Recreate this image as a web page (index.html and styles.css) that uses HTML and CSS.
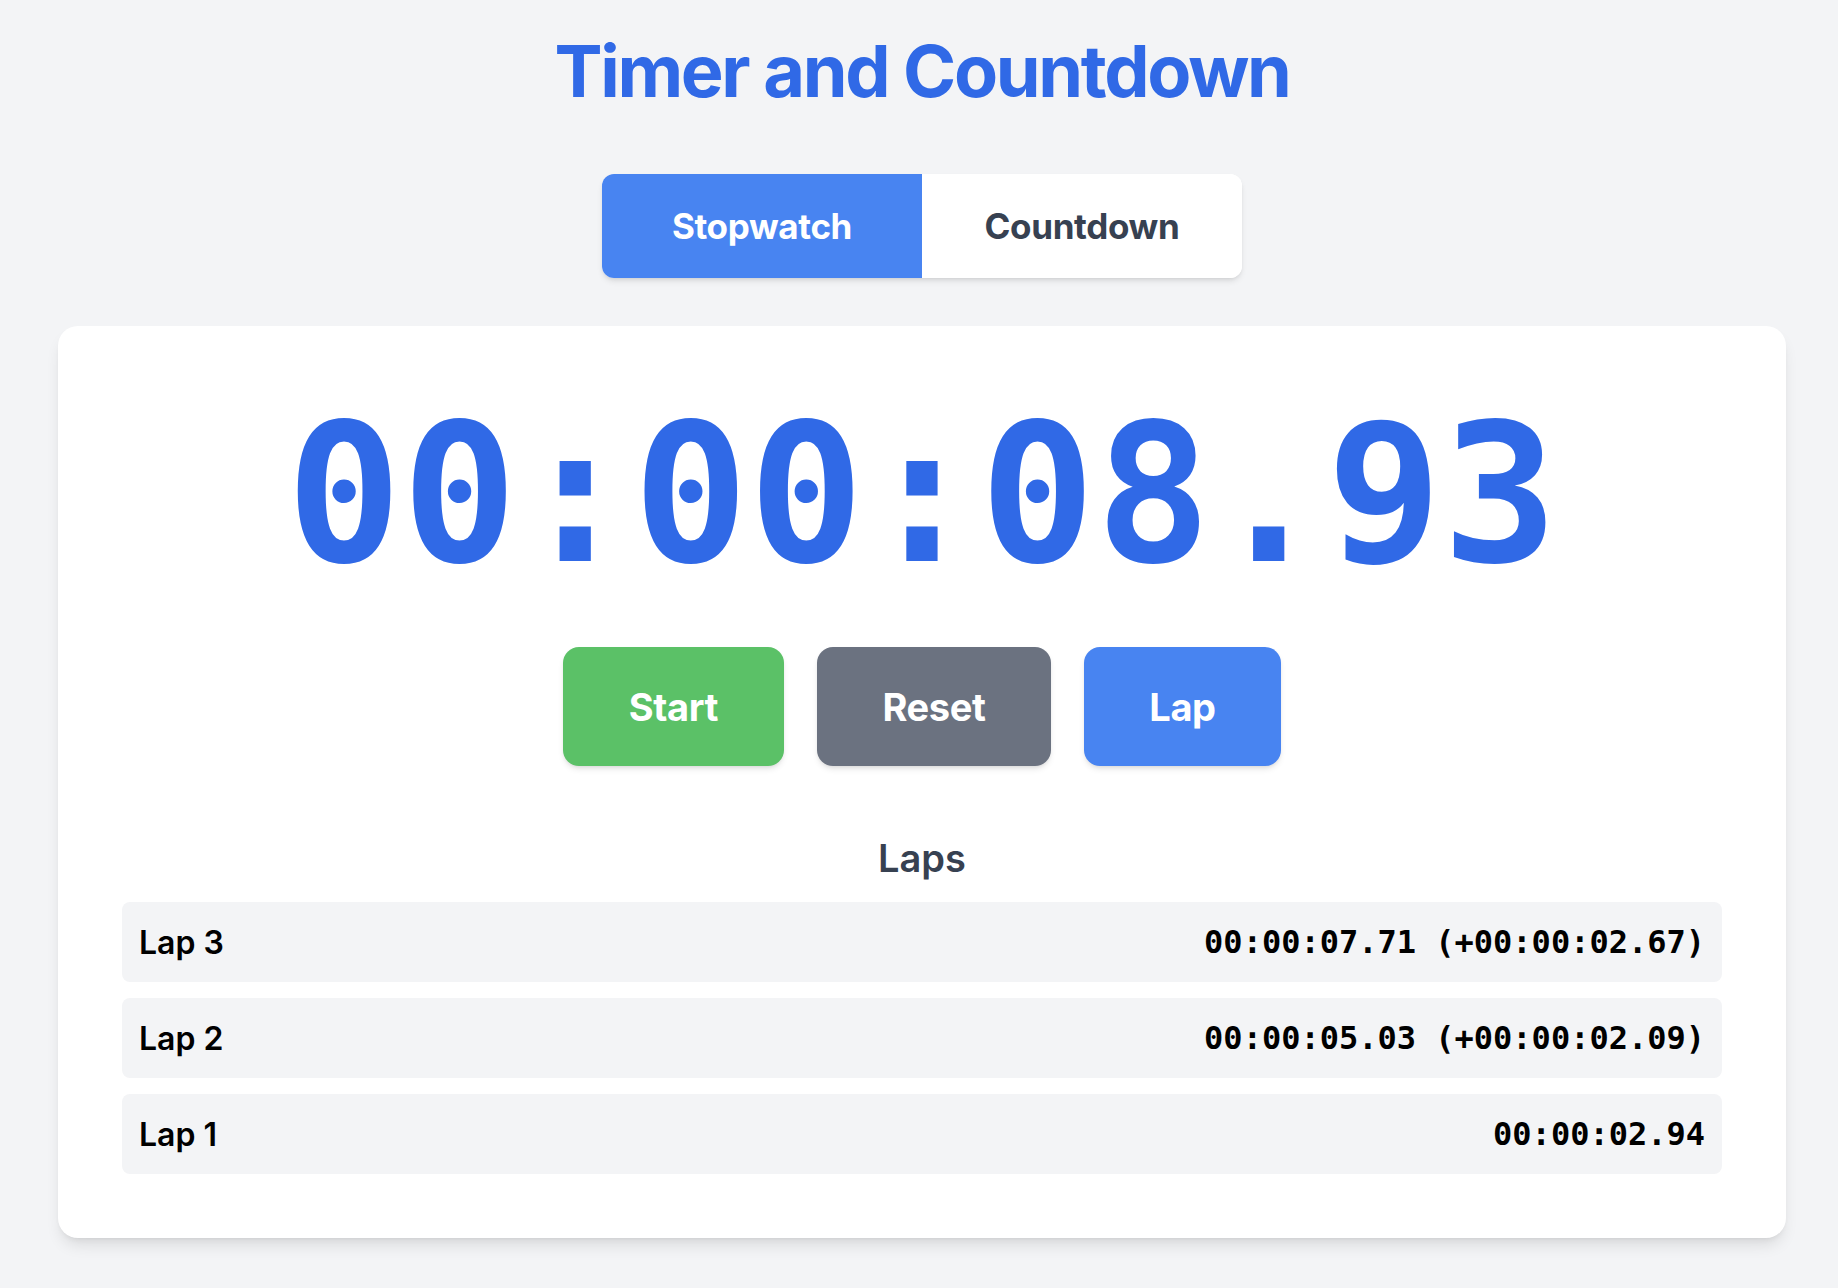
FILE: index.html
```html
<!DOCTYPE html>
<html lang="en">
<head>
<meta charset="utf-8">
<title>Timer and Countdown</title>
<link rel="stylesheet" href="styles.css">
</head>
<body>
<main class="app">
  <h1 class="title">Timer and Countdown</h1>
  <div class="tabs">
    <button class="tab tab-active">Stopwatch</button>
    <button class="tab">Countdown</button>
  </div>
  <section class="card">
    <div class="display">00:00:08.93</div>
    <div class="controls">
      <button class="btn btn-start">Start</button>
      <button class="btn btn-reset">Reset</button>
      <button class="btn btn-lap">Lap</button>
    </div>
    <h2 class="laps-title">Laps</h2>
    <ul class="laps">
      <li class="lap"><span class="lap-name">Lap 3</span><span class="lap-time">00:00:07.71 (+00:00:02.67)</span></li>
      <li class="lap"><span class="lap-name">Lap 2</span><span class="lap-time">00:00:05.03 (+00:00:02.09)</span></li>
      <li class="lap"><span class="lap-name">Lap 1</span><span class="lap-time">00:00:02.94</span></li>
    </ul>
  </section>
</main>
</body>
</html>
```

FILE: styles.css
```css
* { box-sizing: border-box; }

html, body {
  margin: 0;
  padding: 0;
}

body {
  background: #f3f4f6;
  font-family: Inter, "Noto Sans", "Liberation Sans", sans-serif;
  color: #111827;
}

.app {
  display: flex;
  flex-direction: column;
  align-items: center;
  padding: 35px 52px 40px 58px;
}

.title {
  margin: 0;
  font-size: 72px;
  line-height: 1;
  font-weight: 700;
  letter-spacing: -0.032em;
  color: #3069e6;
}

.tabs {
  margin-top: 67px;
  display: flex;
  width: 640px;
  border-radius: 12px;
  overflow: hidden;
  background: #ffffff;
  box-shadow: 0 4px 6px -1px rgba(0,0,0,0.1), 0 2px 4px -2px rgba(0,0,0,0.1);
}

.tab {
  flex: 1;
  border: 0;
  margin: 0;
  padding: 32px 0;
  font-family: inherit;
  font-size: 35px;
  line-height: 40px;
  font-weight: 700;
  letter-spacing: -0.01em;
  background: #ffffff;
  color: #374151;
}

.tab-active {
  background: #4884f1;
  color: #ffffff;
}

.card {
  margin-top: 48px;
  width: 100%;
  background: #ffffff;
  border-radius: 20px;
  padding: 64px 64px 64px;
  box-shadow: 0 10px 15px -3px rgba(0,0,0,0.1), 0 4px 6px -4px rgba(0,0,0,0.1);
  display: flex;
  flex-direction: column;
  align-items: center;
}

.display {
  margin-top: 9px;
  font-family: "DejaVu Sans Mono", "Liberation Mono", monospace;
  font-weight: 700;
  font-size: 192px;
  line-height: 1;
  color: #3069e6;
}

.controls {
  margin-top: 56px;
  display: flex;
  gap: 33px;
}

.btn {
  border: 0;
  margin: 0;
  height: 119px;
  border-radius: 16px;
  font-family: inherit;
  font-size: 38px;
  font-weight: 700;
  letter-spacing: -0.01em;
  color: #ffffff;
  box-shadow: 0 4px 6px -1px rgba(0,0,0,0.1), 0 2px 4px -2px rgba(0,0,0,0.1);
}

.btn-start { width: 221px; background: #5bc167; }
.btn-reset { width: 234px; background: #6b7280; }
.btn-lap { width: 197px; background: #4884f1; }

.laps-title {
  margin: 72px 0 0;
  font-size: 38px;
  line-height: 40px;
  font-weight: 600;
  color: #374151;
}

.laps {
  list-style: none;
  margin: 24px 0 0;
  padding: 0;
  width: 100%;
  display: flex;
  flex-direction: column;
  gap: 16px;
}

.lap {
  display: flex;
  justify-content: space-between;
  align-items: center;
  background: #f3f4f6;
  border-radius: 8px;
  padding: 16px 17px;
  height: 80px;
  color: #000000;
}

.lap-name {
  font-size: 32px;
  font-weight: 600;
}

.lap-time {
  font-family: "DejaVu Sans Mono", "Liberation Mono", monospace;
  font-size: 32px;
  font-weight: 700;
}
```
